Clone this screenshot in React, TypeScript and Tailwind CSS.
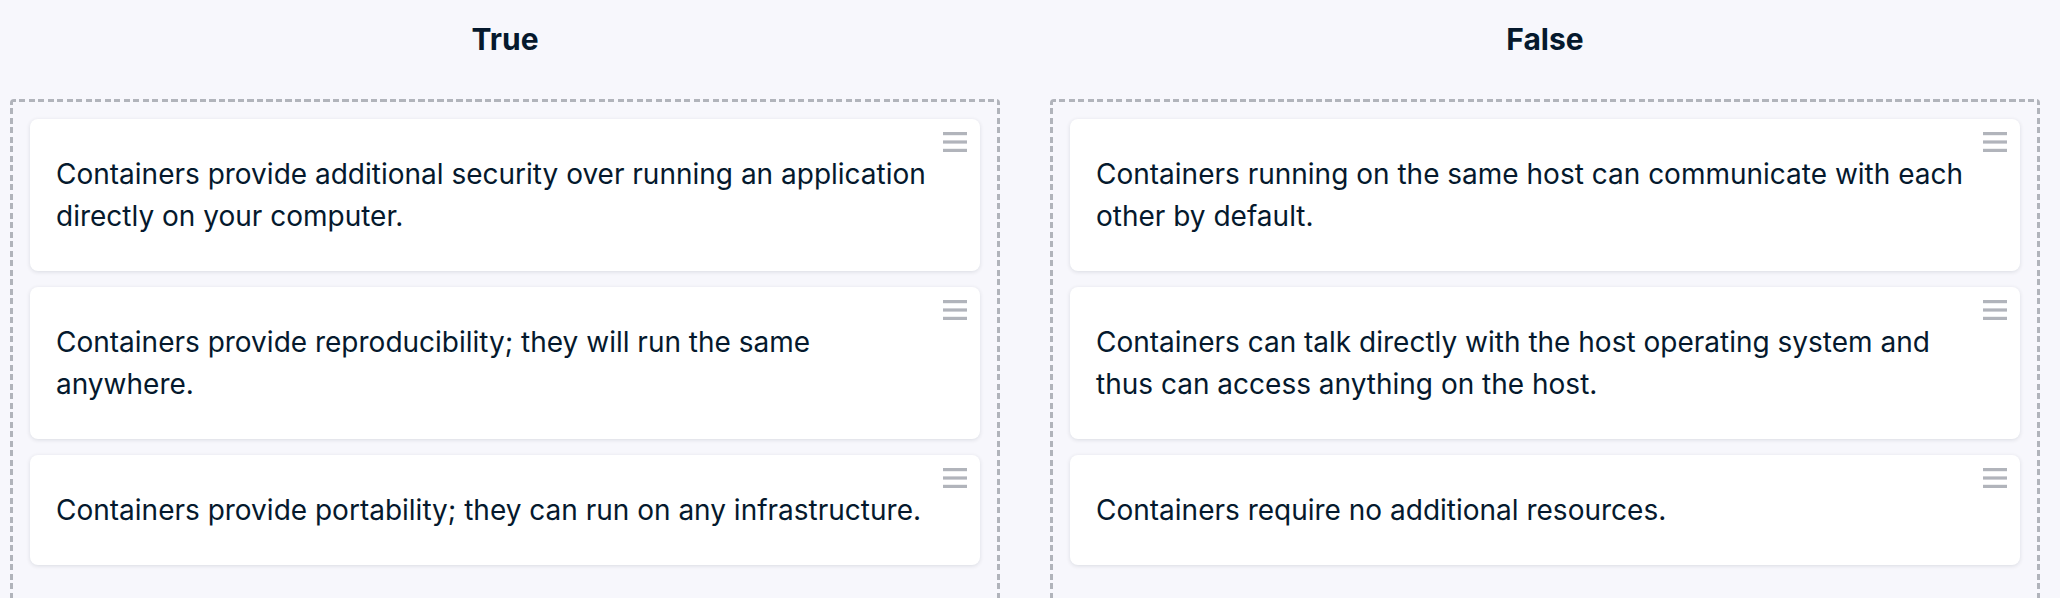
const columns = [
  {
    title: "True",
    items: [
      "Containers provide additional security over running an application directly on your computer.",
      "Containers provide reproducibility; they will run the same anywhere.",
      "Containers provide portability; they can run on any infrastructure.",
    ],
  },
  {
    title: "False",
    items: [
      "Containers running on the same host can communicate with each other by default.",
      "Containers can talk directly with the host operating system and thus can access anything on the host.",
      "Containers require no additional resources.",
    ],
  },
];

function DragHandle() {
  return (
    <svg width="24" height="20" viewBox="0 0 24 20" className="absolute right-[13px] top-[13px]" aria-hidden>
      <rect x="0" y="0" width="24" height="3.2" fill="#b1b4bb" />
      <rect x="0" y="8.4" width="24" height="3.2" fill="#b1b4bb" />
      <rect x="0" y="16.8" width="24" height="3.2" fill="#b1b4bb" />
    </svg>
  );
}

function Card({ text }: { text: string }) {
  return (
    <div className="relative rounded-[8px] bg-white py-[34px] pl-[26px] pr-[48px] shadow-[0_1px_4px_rgba(5,25,45,0.12)]">
      <DragHandle />
      <p className="text-[28px] leading-[42px] text-[#05192d]">{text}</p>
    </div>
  );
}

// dashed drop zone: 3px dashes, 6px on / 3.5px off
const dropZone =
  "flex min-h-[560px] flex-col gap-[16px] rounded-[4px] p-[20px] " +
  "[background-image:repeating-linear-gradient(90deg,#b1b4bb_0_6px,transparent_6px_9.5px),repeating-linear-gradient(90deg,#b1b4bb_0_6px,transparent_6px_9.5px),repeating-linear-gradient(180deg,#b1b4bb_0_6px,transparent_6px_9.5px),repeating-linear-gradient(180deg,#b1b4bb_0_6px,transparent_6px_9.5px)] " +
  "[background-size:100%_3px,100%_3px,3px_100%,3px_100%] [background-position:0_0,0_100%,0_0,100%_0] [background-repeat:no-repeat]";

export default function App() {
  return (
    <div
      className="flex min-h-screen gap-[50px] overflow-hidden bg-[#f7f7fc] pl-[10px]"
      style={{ fontFamily: "Inter, 'Noto Sans', sans-serif" }}
    >
      {columns.map((col) => (
        <section key={col.title} className="flex w-[990px] shrink-0 flex-col">
          <h2 className="pt-[19px] pb-[40px] text-center text-[30px] font-bold leading-[40px] text-[#05192d]">
            {col.title}
          </h2>
          <div className={dropZone}>
            {col.items.map((t) => (
              <Card key={t} text={t} />
            ))}
          </div>
        </section>
      ))}
    </div>
  );
}
